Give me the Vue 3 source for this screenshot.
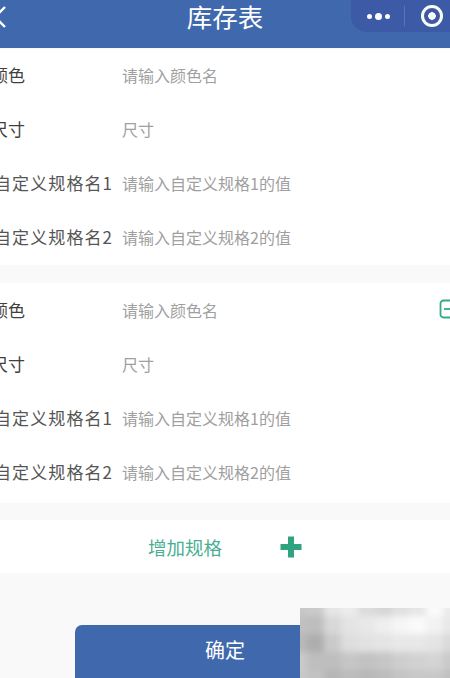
<script setup>
const groups = [
  [
    { label: '颜色', hint: '请输入颜色名' },
    { label: '尺寸', hint: '尺寸' },
    { label: '自定义规格名1', hint: '请输入自定义规格1的值', long: true },
    { label: '自定义规格名2', hint: '请输入自定义规格2的值', long: true }
  ],
  [
    { label: '颜色', hint: '请输入颜色名', minus: true },
    { label: '尺寸', hint: '尺寸' },
    { label: '自定义规格名1', hint: '请输入自定义规格1的值', long: true },
    { label: '自定义规格名2', hint: '请输入自定义规格2的值', long: true }
  ]
]
const shades = [
  '#c8c8c8', '#cacaca', '#e6e6e6', '#ececec', '#dcdcdc', '#d6d6d6', '#e0e0e0', '#e6e6e6', '#fbfbfb', '#ececec',
  '#c0c0c0', '#bebebe', '#d8d8d8', '#e4e4e4', '#e8e8e8', '#eeeeee', '#f6f6f6', '#fafafa', '#f2f2f2', '#e8e8e8',
  '#b8b8b8', '#aeaeae', '#cacaca', '#dedede', '#e2e2e2', '#e4e4e4', '#e8e8e8', '#e8e8e8', '#e4e4e4', '#dadada',
  '#cacaca', '#bebebe', '#bebebe', '#c6c6c6', '#c2c2c2', '#c6c6c6', '#cecece', '#d2d2d2', '#d4d4d4', '#cacaca',
  '#c8c8c8', '#c2c2c2', '#b6b6b6', '#bcbcbc', '#b8b8b8', '#bcbcbc', '#c4c4c4', '#c8c8c8', '#c8c8c8', '#c0c0c0'
]
</script>

<template>
  <div class="page">
    <header class="nav">
      <svg class="back" viewBox="0 0 14 24" width="14" height="24"><path d="M12 2 2 12l10 10" fill="none" stroke="#fff" stroke-width="2.4" /></svg>
      <h1 class="title">库存表</h1>
      <div class="capsule">
        <span class="dots"><i class="dot"></i><i class="dot big"></i><i class="dot"></i></span>
        <span class="divider"></span>
        <span class="target"></span>
      </div>
    </header>

    <section v-for="(group, g) in groups" :key="g" class="group">
      <div v-for="(row, r) in group" :key="r" class="row">
        <span class="label" :class="{ long: row.long }">{{ row.label }}</span>
        <span class="hint">{{ row.hint }}</span>
        <svg v-if="row.minus" class="minus" viewBox="0 0 20 20" width="20" height="20">
          <rect x="1.5" y="1.5" width="17" height="17" rx="3" fill="none" stroke="#35a98a" stroke-width="1.8" />
          <path d="M5 10h10" stroke="#35a98a" stroke-width="1.8" />
        </svg>
      </div>
    </section>

    <div class="add">
      <span class="add-text">增加规格</span>
      <svg class="plus" viewBox="0 0 22 22" width="22" height="22"><path d="M11 .5v21M.5 11h21" stroke="#2fa27f" stroke-width="6" /></svg>
    </div>

    <div class="footer">
      <button class="confirm">确定</button>
    </div>

    <div class="mosaic">
      <div class="mosaic-cells">
        <i v-for="(s, i) in shades" :key="i" :style="{ background: s }"></i>
      </div>
    </div>
  </div>
</template>

<style scoped>
.page {
  position: relative;
  width: 450px;
  height: 678px;
  overflow: hidden;
  background: #f9f9f9;
  font-family: "Noto Sans CJK SC", "Liberation Sans", sans-serif;
}
.nav {
  height: 48px;
  background: #3f69ac;
  position: relative;
  display: flex;
  align-items: center;
  justify-content: center;
  margin-bottom: 1px;
}
.back {
  position: absolute;
  left: -7px;
  top: 5px;
}
.title {
  margin: 0 0 16px;
  font-size: 25.5px;
  font-weight: 400;
  line-height: 32px;
  color: #fff;
}
.capsule {
  position: absolute;
  left: 351px;
  top: 0;
  width: 110px;
  height: 32px;
  border-radius: 0 0 0 16px;
  background: #3c5aa6;
  display: flex;
  align-items: center;
}
.dots {
  display: flex;
  align-items: center;
  gap: 3px;
  margin-left: 16px;
}
.dot {
  width: 5px;
  height: 5px;
  border-radius: 50%;
  background: #fff;
}
.dot.big {
  width: 7px;
  height: 7px;
}
.divider {
  width: 1px;
  height: 20px;
  margin-left: 14px;
  background: #5577b5;
}
.target {
  width: 22px;
  height: 22px;
  margin-left: 16px;
  border: 3px solid #fff;
  border-radius: 50%;
  box-sizing: border-box;
  background: radial-gradient(circle, #fff 0 3.5px, transparent 4px);
}
.group {
  background: #fff;
  margin-bottom: 18px;
}
.group + .group {
  padding: 1px 0 3px;
  margin-bottom: 17px;
}
.row {
  height: 54px;
  box-sizing: border-box;
  padding-bottom: 3px;
  display: flex;
  align-items: center;
  position: relative;
}
.label {
  width: 131px;
  margin-left: -9px;
  flex: none;
  font-size: 17px;
  color: #404040;
  white-space: nowrap;
}
.label.long {
  letter-spacing: 1.1px;
  text-indent: 3px;
  color: #555;
}
.hint {
  font-size: 16px;
  color: #a0a0a0;
  white-space: nowrap;
}
.minus {
  position: absolute;
  left: 439px;
  top: 15px;
}
.add {
  height: 53px;
  background: #fff;
  display: flex;
  align-items: center;
  padding-left: 148px;
}
.add-text {
  font-size: 18.5px;
  color: #4aae93;
  width: 132px;
}
.plus {
  flex: none;
}
.footer {
  padding: 52px 0 0 75px;
}
.confirm {
  display: block;
  width: 300px;
  height: 60px;
  border: 0;
  border-radius: 7px;
  background: #3f69ac;
  color: #fff;
  font: inherit;
  font-size: 20px;
  padding: 0 0 11px;
}
.mosaic {
  position: absolute;
  left: 300px;
  top: 608px;
  width: 150px;
  height: 70px;
  overflow: hidden;
}
.mosaic-cells {
  width: 170px;
  height: 90px;
  margin: -10px;
  display: grid;
  grid-template-columns: repeat(10, 17px);
  grid-template-rows: repeat(5, 18px);
  filter: blur(3px);
}
</style>
